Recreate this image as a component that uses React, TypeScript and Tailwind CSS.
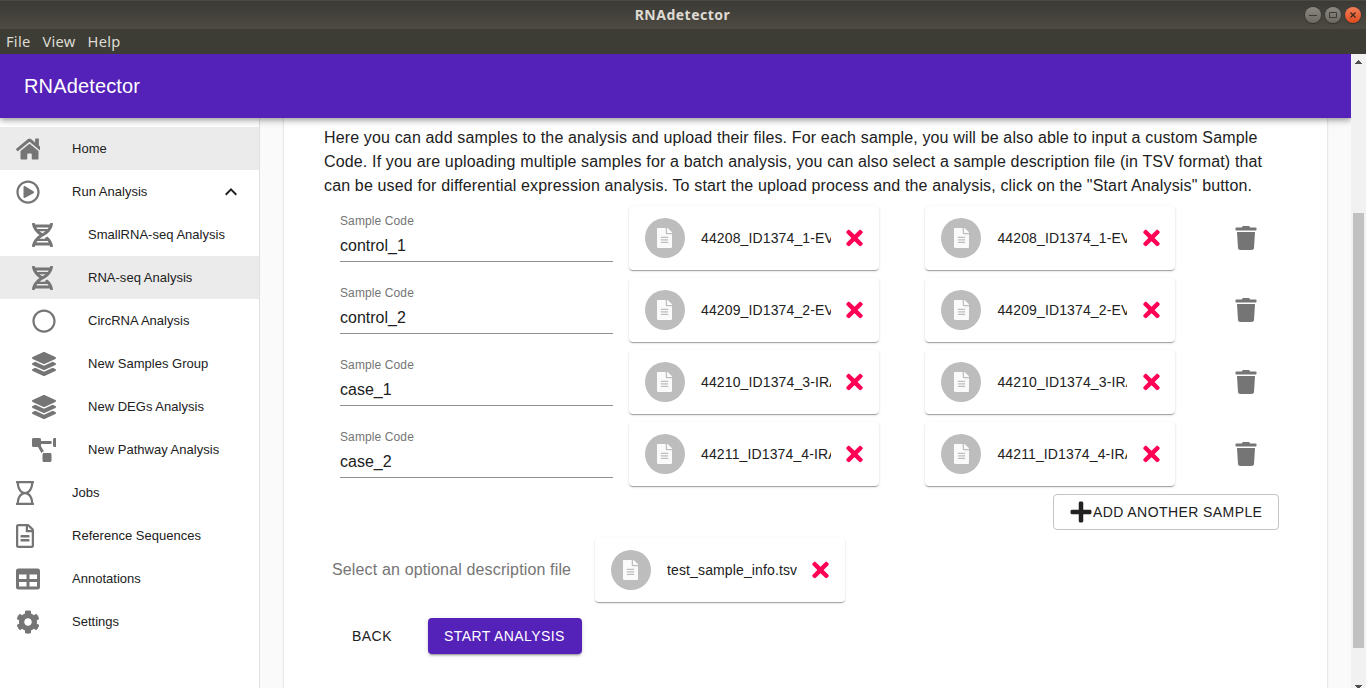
import type { ReactNode } from "react";
import {
  FaCog,
  FaDna,
  FaFileAlt,
  FaHome,
  FaLayerGroup,
  FaPlus,
  FaProjectDiagram,
  FaRegCircle,
  FaRegFileAlt,
  FaRegHourglass,
  FaRegPlayCircle,
  FaTable,
  FaTimes,
  FaTrash,
} from "react-icons/fa";

type NavItem = {
  label: string;
  icon: ReactNode;
  nested?: boolean;
  active?: boolean;
  expanded?: boolean;
};

const navItems: NavItem[] = [
  { label: "Home", icon: <FaHome className="h-6 w-[27px] shrink-0" />, active: true },
  { label: "Run Analysis", icon: <FaRegPlayCircle className="h-6 w-6 shrink-0" />, expanded: true },
  { label: "SmallRNA-seq Analysis", icon: <FaDna className="h-6 w-[21px] shrink-0" />, nested: true },
  { label: "RNA-seq Analysis", icon: <FaDna className="h-6 w-[21px] shrink-0" />, nested: true, active: true },
  { label: "CircRNA Analysis", icon: <FaRegCircle className="h-6 w-6 shrink-0" />, nested: true },
  { label: "New Samples Group", icon: <FaLayerGroup className="h-6 w-6 shrink-0" />, nested: true },
  { label: "New DEGs Analysis", icon: <FaLayerGroup className="h-6 w-6 shrink-0" />, nested: true },
  { label: "New Pathway Analysis", icon: <FaProjectDiagram className="h-6 w-[30px] shrink-0" />, nested: true },
  { label: "Jobs", icon: <FaRegHourglass className="h-6 w-[18px] shrink-0" /> },
  { label: "Reference Sequences", icon: <FaRegFileAlt className="h-6 w-[18px] shrink-0" /> },
  { label: "Annotations", icon: <FaTable className="h-6 w-6 shrink-0" /> },
  { label: "Settings", icon: <FaCog className="h-6 w-6 shrink-0" /> },
];

const samples = [
  { code: "control_1", file: "44208_ID1374_1-EV" },
  { code: "control_2", file: "44209_ID1374_2-EV" },
  { code: "case_1", file: "44210_ID1374_3-IRA" },
  { code: "case_2", file: "44211_ID1374_4-IRA" },
];

function TitleBar() {
  return (
    <div className="grid h-[29px] shrink-0 grid-cols-[1fr_auto_1fr] items-center border-t border-[#4a4943] bg-linear-to-b from-[#3b3a35] to-[#4d4a43] pr-[5px] font-['Noto_Sans',sans-serif]">
      <span />
      <span className="pl-1 text-[14px] leading-5 font-bold tracking-[0.5px] text-[#dfdbd2]">RNAdetector</span>
      <div className="flex justify-end gap-1">
        <WindowButton className="bg-linear-to-b from-[#8b8982] to-[#6b6962]">
          <path d="M4 8.5h8" stroke="#3c3b37" />
        </WindowButton>
        <WindowButton className="bg-linear-to-b from-[#8b8982] to-[#6b6962]">
          <path d="M4.5 5.5h7v5h-7z" stroke="#3c3b37" />
        </WindowButton>
        <WindowButton className="bg-linear-to-b from-[#f37e57] to-[#de4a1b]">
          <path d="M5.5 5.5l5 5M10.5 5.5l-5 5" stroke="#3c2a20" strokeWidth="1.3" />
        </WindowButton>
      </div>
    </div>
  );
}

function WindowButton({ className, children }: { className: string; children: ReactNode }) {
  return (
    <span className={`size-4 rounded-full shadow-[0_0_0_0.5px_#33322e,0_1px_1px_#33322e] ${className}`}>
      <svg viewBox="0 0 16 16" className="size-4" fill="none">
        {children}
      </svg>
    </span>
  );
}

function Sidebar() {
  return (
    <nav className="w-[260px] shrink-0 border-r border-[#e0e0e0] bg-white pt-[9px]">
      {navItems.map((item) => (
        <div
          key={item.label}
          className={`flex h-[43px] items-center pr-4 ${item.nested ? "pl-8" : "pl-4"} ${item.active ? "bg-[#ebebeb]" : ""}`}
        >
          <span className="mt-px flex w-6 shrink-0 overflow-hidden text-[#757575]">{item.icon}</span>
          <span className="ml-8 flex-1 text-[13px] tracking-[0.02px] whitespace-nowrap text-[#212121]">
            {item.label}
          </span>
          {item.expanded && (
            <svg viewBox="0 0 24 24" className="size-6 fill-[#212121]">
              <path d="M12 8l-6 6 1.41 1.41L12 10.83l4.59 4.58L18 14z" />
            </svg>
          )}
        </div>
      ))}
    </nav>
  );
}

function FileCard({ name }: { name: string }) {
  return (
    <div className="flex h-16 w-[250px] shrink-0 items-center rounded bg-white pl-4 shadow-[0_2px_1px_-1px_rgba(0,0,0,0.2),0_1px_1px_0_rgba(0,0,0,0.14),0_1px_3px_0_rgba(0,0,0,0.12)]">
      <span className="flex size-10 shrink-0 items-center justify-center rounded-full bg-[#bdbdbd] text-[#fafafa]">
        <FaFileAlt className="mr-[0.6px] h-5 w-[15px]" />
      </span>
      <span className="ml-4 w-[130px] overflow-hidden text-[14px] leading-5 tracking-[0.13px] whitespace-nowrap text-[#212121]">
        {name}
      </span>
      <FaTimes className="ml-[15.2px] h-6 w-[17px] shrink-0 text-[#ff0055]" />
    </div>
  );
}

function SampleRow({ code, file }: { code: string; file: string }) {
  return (
    <div className="flex h-[72px] pl-4">
      <div className="mr-4 flex h-14 w-[273px] shrink-0 flex-col border-b border-[#919191] pt-2">
        <span className="text-[12px] leading-[14px] tracking-[0.11px] text-[#757575]">Sample Code</span>
        <span className="mt-2 text-[16px] leading-[19px] text-[#212121]">{code}</span>
      </div>
      <FileCard name={file} />
      <span className="w-[46.4px] shrink-0" />
      <FileCard name={file} />
      <FaTrash className="mt-5 ml-[59.8px] h-6 w-[22px] shrink-0 text-[#757575]" />
    </div>
  );
}

function Content() {
  return (
    <main className="flex min-w-0 flex-1 bg-[#fafafa] px-6">
      <section className="w-[1043px] bg-white pt-2 pl-10 shadow-[0_0_2px_rgba(0,0,0,0.22)]">
        <p className="mb-2 text-[16px] leading-6 tracking-[0.15px] whitespace-nowrap text-[#212121]">
          Here you can add samples to the analysis and upload their files. For each sample, you will be also able to input a custom Sample
          <br />
          Code. If you are uploading multiple samples for a batch analysis, you can also select a sample description file (in TSV format) that
          <br />
          can be used for differential expression analysis. To start the upload process and the analysis, click on the "Start Analysis" button.
        </p>
        {samples.map((sample) => (
          <SampleRow key={sample.code} {...sample} />
        ))}
        <div className="flex justify-end pr-12">
          <button className="flex h-9 w-[226px] items-center rounded border border-[#c4c4c4] pl-4 text-[14px] tracking-[0.42px] whitespace-nowrap text-[#212121]">
            <FaPlus className="mr-px h-6 w-[22px] shrink-0" />
            ADD ANOTHER SAMPLE
          </button>
        </div>
        <div className="mt-2 flex items-center pl-2">
          <span className="w-[263px] text-[16px] tracking-[0.15px] text-[#757575]">Select an optional description file</span>
          <FileCard name="test_sample_info.tsv" />
        </div>
        <div className="mt-4 flex pl-4 text-[14px] tracking-[0.42px]">
          <button className="mr-6 h-9 w-16 text-[#212121]">BACK</button>
          <button className="h-9 w-[154px] rounded bg-[#5421b9] pl-4 text-left whitespace-nowrap text-white shadow-[0_3px_1px_-2px_rgba(0,0,0,0.2),0_2px_2px_0_rgba(0,0,0,0.14),0_1px_5px_0_rgba(0,0,0,0.12)]">
            START ANALYSIS
          </button>
        </div>
      </section>
    </main>
  );
}

function Scrollbar() {
  return (
    <div className="flex w-[15px] shrink-0 flex-col items-center overflow-hidden bg-[#f1f1f1]">
      <svg viewBox="0 0 15 15" className="h-[15px] w-[15px] shrink-0 fill-[#505050]" shapeRendering="crispEdges">
        <path d="M7 6h1v1h1v1h1v1h1v1H4V9h1V8h1V7h1z" />
      </svg>
      <div className="mt-36 h-[435px] w-[11px] shrink-0 bg-[#c1c1c1]" />
      <svg viewBox="0 0 15 15" className="mt-[31px] h-[15px] w-[15px] shrink-0 fill-[#505050]" shapeRendering="crispEdges">
        <path d="M4 6h7v1h-1v1H9v1H8v1H7V9H6V8H5V7H4z" />
      </svg>
    </div>
  );
}

export default function App() {
  return (
    <div className="flex h-[688px] w-[1366px] flex-col overflow-hidden font-['Liberation_Sans',Arial,sans-serif]">
      <TitleBar />
      <div className="flex h-[25px] shrink-0 items-center gap-3 bg-[#3d3d36] pb-[2px] pl-[6px] font-['Noto_Sans',sans-serif] text-[14.67px] tracking-[0.25px] text-[#dfdbd2]">
        <span>File</span>
        <span>View</span>
        <span>Help</span>
      </div>
      <div className="flex min-h-0 flex-1">
        <div className="flex min-w-0 flex-1 flex-col overflow-hidden">
          <header className="z-10 flex h-16 shrink-0 items-center bg-[#5421b9] pl-6 text-[20px] tracking-[0.15px] text-white shadow-[0_2px_4px_-1px_rgba(0,0,0,0.2),0_4px_5px_0_rgba(0,0,0,0.14),0_1px_10px_0_rgba(0,0,0,0.12)]">
            RNAdetector
          </header>
          <div className="flex min-h-0 flex-1">
            <Sidebar />
            <Content />
          </div>
        </div>
        <Scrollbar />
      </div>
    </div>
  );
}
